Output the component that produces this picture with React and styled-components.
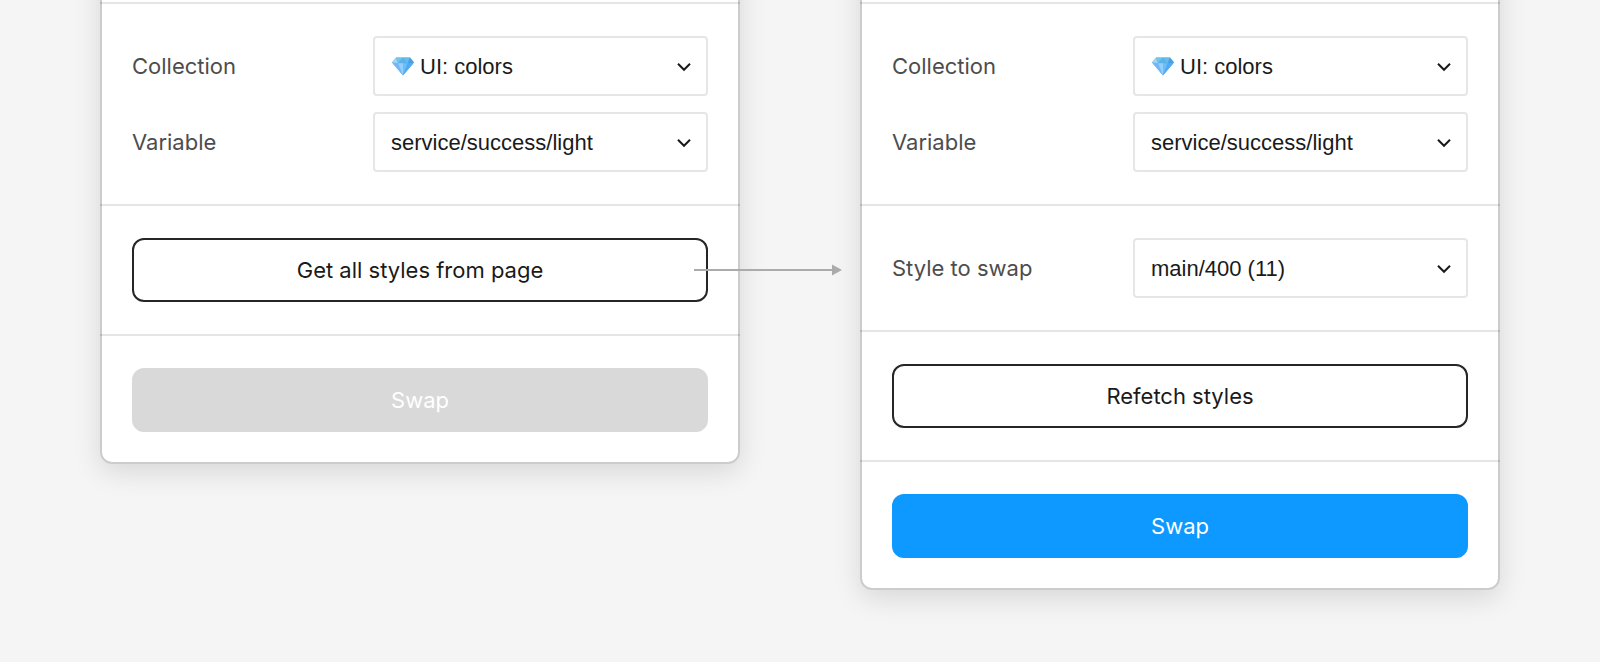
import React, { useId } from "react";
import styled, { createGlobalStyle } from "styled-components";

const GlobalStyle = createGlobalStyle`
  *, *::before, *::after { box-sizing: border-box; }
  body {
    margin: 0;
    background: #f5f5f5;
    font-family: Inter, "Liberation Sans", sans-serif;
    font-size: 22px;
    line-height: 32px;
    color: #1a1a1a;
  }
`;

const Page = styled.main`
  display: flex;
  justify-content: center;
  align-items: flex-start;
  gap: 120px;
  min-height: 100vh;
  padding: 0 100px;
  overflow: hidden;
`;

/* The upper part of each plugin window runs off the top of the page. */
const Panel = styled.form`
  position: relative;
  flex: 1 1 0;
  min-width: 0;
  max-width: 640px;
  margin-top: -60px;
  padding-top: 62px;
  background: #fff;
  border-radius: 12px;
  box-shadow: 0 8px 28px rgba(0, 0, 0, 0.12);

  &::after {
    content: "";
    position: absolute;
    inset: 0;
    border: 2px solid rgba(0, 0, 0, 0.2);
    border-radius: inherit;
    pointer-events: none;
  }
`;

const Section = styled.section`
  display: flex;
  flex-direction: column;
  gap: 16px;
  padding: 32px;
  border-top: 2px solid #e5e5e5;
`;

const Field = styled.div`
  display: flex;
  align-items: center;
  justify-content: space-between;
  gap: 16px;
`;

const Label = styled.label`
  color: #4d4d4d;
`;

const SelectBox = styled.div`
  position: relative;
  flex: 0 1 335px;
  min-width: 0;
`;

const Select = styled.select`
  appearance: none;
  display: block;
  width: 100%;
  height: 60px;
  padding: 2px 48px 0 ${(p) => (p.$icon ? "45px" : "16px")};
  border: 2px solid #e6e6e6;
  border-radius: 4px;
  background: #fff;
  color: #1a1a1a;
  font: 22px/32px "Liberation Sans", Arial, sans-serif;
`;

const Chevron = styled.svg`
  position: absolute;
  top: 26px;
  right: 16px;
  pointer-events: none;
`;

const Gem = styled.svg`
  position: absolute;
  top: 21px;
  left: 19px;
  pointer-events: none;
`;

const ButtonBox = styled.div`
  position: relative;
`;

const buttonLook = {
  outline: { background: "#fff", border: "#262626", color: "#1a1a1a" },
  primary: { background: "#0d99ff", border: "#0d99ff", color: "#fff" },
  disabled: { background: "#d9d9d9", border: "#d9d9d9", color: "#fff" },
};

const Button = styled.button`
  display: block;
  width: 100%;
  height: 64px;
  padding: 0 16px;
  border: 2px solid ${(p) => buttonLook[p.$look].border};
  border-radius: 12px;
  background: ${(p) => buttonLook[p.$look].background};
  color: ${(p) => buttonLook[p.$look].color};
  font: inherit;
`;

const Arrow = styled.svg`
  position: absolute;
  z-index: 1;
  top: 26px;
  left: calc(100% - 14px);
  pointer-events: none;
`;

function GemIcon() {
  return (
    <Gem width="22" height="19" viewBox="0 0 22 19" aria-hidden="true">
      <path d="M4 0.5h14L22 5.5 11 18.5 0 5.5z" fill="#5db3f3" />
      <path d="M4 0.5L0 5.5l6 .8z" fill="#9fd6f6" />
      <path d="M4 0.5L6 6.3 11 0.5z" fill="#6fc3ec" />
      <path d="M11 0.5L6 6.3h9.6z" fill="#5ab2e6" />
      <path d="M11 0.5h7l-2.4 5.8z" fill="#64bdec" />
      <path d="M18 0.5L22 5.5l-6.4.8z" fill="#4a9fdf" />
      <path d="M0 5.5l6 .8L11 18.5z" fill="#74b6f6" />
      <path d="M6 6.3h5v12.2z" fill="#92d0fb" />
      <path d="M11 6.3h4.6L11 18.5z" fill="#6cbdf9" />
      <path d="M22 5.5l-6.4.8L11 18.5z" fill="#53a8f3" />
    </Gem>
  );
}

function SelectField({ label, value, gem }) {
  const id = useId();
  return (
    <Field>
      <Label htmlFor={id}>{label}</Label>
      <SelectBox>
        <Select id={id} $icon={gem} defaultValue={value}>
          <option>{value}</option>
        </Select>
        {gem && <GemIcon />}
        <Chevron width="16" height="10" viewBox="0 0 16 10" aria-hidden="true">
          <path d="M2 1.8l6 6 6-6" fill="none" stroke="#1a1a1a" strokeWidth="2" />
        </Chevron>
      </SelectBox>
    </Field>
  );
}

function VariableSection() {
  return (
    <Section>
      <SelectField label="Collection" value="UI: colors" gem />
      <SelectField label="Variable" value="service/success/light" />
    </Section>
  );
}

export default function App() {
  return (
    <>
      <GlobalStyle />
      <Page>
        <Panel>
          <VariableSection />
          <Section>
            <ButtonBox>
              <Button type="button" $look="outline">Get all styles from page</Button>
              <Arrow width="148" height="12" viewBox="0 0 148 12" aria-hidden="true">
                <path d="M0 5h138v2H0z" fill="#ababab" />
                <path d="M138 0.5L148 6l-10 5.5z" fill="#ababab" />
              </Arrow>
            </ButtonBox>
          </Section>
          <Section>
            <Button type="button" $look="disabled" disabled>Swap</Button>
          </Section>
        </Panel>
        <Panel>
          <VariableSection />
          <Section>
            <SelectField label="Style to swap" value="main/400 (11)" />
          </Section>
          <Section>
            <Button type="button" $look="outline">Refetch styles</Button>
          </Section>
          <Section>
            <Button type="button" $look="primary">Swap</Button>
          </Section>
        </Panel>
      </Page>
    </>
  );
}
